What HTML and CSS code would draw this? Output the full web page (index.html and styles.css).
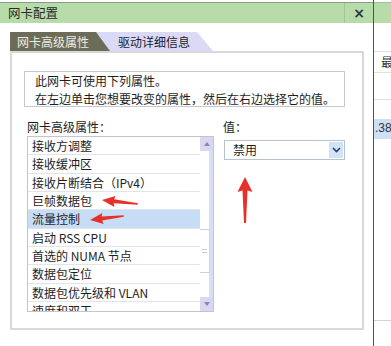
FILE: index.html
```html
<!DOCTYPE html>
<html lang="zh-CN">
<head>
<meta charset="utf-8">
<title>网卡配置</title>
<link rel="stylesheet" href="styles.css">
</head>
<body>
<div class="screen">
  <div class="dialog">
    <div class="titlebar">
      <span class="title">网卡配置</span>
      <span class="close">×</span>
    </div>
    <div class="content">
      <div class="tabs">
        <div class="tab tab-active">网卡高级属性</div>
        <div class="tab tab-other">驱动详细信息</div>
      </div>
      <div class="panel">
        <div class="info">
          <p>此网卡可使用下列属性。</p>
          <p>在左边单击您想要改变的属性，然后在右边选择它的值。</p>
        </div>
        <div class="cols">
          <div class="col-left">
            <div class="label">网卡高级属性：</div>
            <div class="listbox">
              <ul class="items">
                <li>接收方调整</li>
                <li>接收缓冲区</li>
                <li>接收片断结合（IPv4）</li>
                <li>巨帧数据包</li>
                <li class="selected">流量控制</li>
                <li>启动 RSS CPU</li>
                <li>首选的 NUMA 节点</li>
                <li>数据包定位</li>
                <li>数据包优先级和 VLAN</li>
                <li>速度和双工</li>
              </ul>
              <div class="scrollbar">
                <div class="sb-btn"><span class="tri-up"></span></div>
                <div class="sb-track">
                  <div class="sb-thumb"><span class="grip"></span></div>
                </div>
                <div class="sb-btn"><span class="tri-down"></span></div>
              </div>
            </div>
          </div>
          <div class="col-right">
            <div class="label">值：</div>
            <div class="select">
              <span class="select-text">禁用</span>
              <span class="select-btn">
                <svg width="9" height="6" viewBox="0 0 9 6"><path d="M1 1 L4.5 4.5 L8 1" fill="none" stroke="#1f3f7a" stroke-width="1.6"/></svg>
              </span>
            </div>
          </div>
        </div>
      </div>
    </div>
  </div>
  <div class="divider"></div>
  <div class="side">
    <div class="side-title"></div>
    <div class="side-body">
      <div class="side-row side-head">最</div>
      <div class="side-row side-empty"></div>
      <div class="side-row side-thin"></div>
      <div class="side-row side-sel">.38</div>
      <div class="side-fill"></div>
    </div>
  </div>
  <svg class="arrows" width="391" height="346" viewBox="0 0 391 346">
    <g fill="#e8302a">
      <polygon transform="translate(102 200) rotate(6.3)" points="0,0 13,-5.5 12,-2 36,-0.8 36,0.8 12,2 13,5.5"/>
      <polygon transform="translate(90 220) rotate(-6.7)" points="0,0 13,-5.5 12,-2 34,-0.8 34,0.8 12,2 13,5.5"/>
      <polygon transform="translate(245 177) rotate(90)" points="0,0 15,-7.5 13.5,-2.5 46,-1 46,1 13.5,2.5 15,7.5"/>
    </g>
  </svg>
</div>
</body>
</html>
```

FILE: styles.css
```css
* { box-sizing: border-box; }
html, body { margin: 0; padding: 0; background: #ffffff; }
body {
  font-family: "Noto Sans CJK SC", "Noto Sans", sans-serif;
  font-size: 12px;
  color: #1e1e1e;
}
.screen {
  position: relative;
  width: 391px;
  height: 346px;
  overflow: hidden;
  display: flex;
  background: #ffffff;
}
.dialog {
  width: 373px;
  flex: none;
  padding-top: 2px;
}
.titlebar {
  height: 21px;
  border-top: 1px solid #8d9a88;
  background: #b8dca9;
  display: flex;
  align-items: center;
  justify-content: space-between;
}
.title {
  padding-left: 8px;
  font-size: 12.5px;
  line-height: 20px;
  color: #2a2a2a;
}
.close {
  width: 29px;
  height: 20px;
  border-left: 1px solid #a3c695;
  display: flex;
  align-items: center;
  justify-content: center;
  font-family: "DejaVu Sans", sans-serif;
  font-weight: bold;
  font-size: 14px;
  color: #2d3a3f;
}
.content {
  padding-top: 9px;
  padding-left: 10px;
}
.tabs {
  display: flex;
  height: 19px;
}
.tab {
  height: 19px;
  line-height: 19px;
  font-size: 12px;
}
.tab-active {
  position: relative;
  z-index: 1;
  width: 100px;
  padding-left: 7px;
  background: #6c6c58;
  color: #ecece4;
  clip-path: polygon(0 0, 86px 0, 100% 100%, 0 100%);
}
.tab-other {
  width: 118px;
  margin-left: -15px;
  padding-left: 23px;
  background: #dadaf6;
  color: #1c1c2c;
  clip-path: polygon(0 0, 102px 0, 100% 100%, 0 100%);
}
.panel {
  width: 354px;
  height: 279px;
  border: 2px solid #d9d9d9;
  padding: 18px 0 0 12px;
}
.info {
  width: 321px;
  height: 36px;
  border: 1px solid #c9c9c9;
  padding-left: 10px;
}
.info p {
  margin: 0;
  line-height: 18px;
  white-space: nowrap;
}
.cols {
  display: flex;
  margin-top: 12px;
  padding-left: 3px;
  gap: 10px;
}
.label {
  line-height: 16px;
  height: 16px;
  white-space: nowrap;
}
.col-left { width: 187px; }
.col-right { width: 121px; }
.col-right .label { margin-left: -1px; }
.listbox {
  margin-top: 1px;
  width: 187px;
  height: 176px;
  border: 1px solid #c4c4cc;
  display: flex;
  overflow: hidden;
}
.items {
  list-style: none;
  margin: 0;
  padding: 0;
  width: 172px;
  flex: none;
}
.items li {
  height: 18.35px;
  line-height: 17px;
  padding-left: 4px;
  border-bottom: 1px solid #e3e3ea;
  white-space: nowrap;
}
.items li.selected {
  background: #c7ddf6;
}
.scrollbar {
  width: 13px;
  flex: none;
  display: flex;
  flex-direction: column;
  background: linear-gradient(to right, #ffffff 0, #ffffff 9px, #dcdcf4 9px, #dcdcf4 100%);
}
.sb-btn {
  height: 14px;
  background: #d8d8f2;
  display: flex;
  align-items: center;
  justify-content: center;
}
.tri-up, .tri-down {
  width: 0;
  height: 0;
  border-left: 3.5px solid transparent;
  border-right: 3.5px solid transparent;
}
.tri-up { border-bottom: 4px solid #8a8aa8; }
.tri-down { border-top: 4px solid #8a8aa8; }
.sb-track {
  flex: 1;
  padding-top: 78px;
}
.sb-thumb {
  width: 10px;
  height: 44px;
  background: #ffffff;
  border-top: 1px solid #cfcfe0;
  border-bottom: 1px solid #cfcfe0;
  border-right: 1px solid #cfcfe0;
  display: flex;
  align-items: center;
  justify-content: center;
}
.grip {
  width: 5px;
  height: 4px;
  border-top: 1px solid #c8c8d8;
  border-bottom: 1px solid #c8c8d8;
}
.select {
  margin-top: 5px;
  width: 121px;
  height: 20px;
  border: 1px solid #b4c2d2;
  display: flex;
  align-items: center;
  justify-content: space-between;
  padding: 0 1px 0 8px;
}
.select-text { line-height: 18px; }
.select-btn {
  width: 14px;
  height: 16px;
  background: #d2e3f6;
  display: flex;
  align-items: center;
  justify-content: center;
}
.divider {
  width: 1px;
  flex: none;
  background: #505050;
}
.side {
  flex: 1;
  padding-top: 2px;
}
.side-title {
  height: 21px;
  border-top: 1px solid #a8b8a0;
  background: #b8dca9;
}
.side-body {
  padding-top: 28px;
}
.side-row {
  border-top: 1px solid #e2e2e2;
  white-space: nowrap;
  overflow: hidden;
}
.side-head {
  height: 21px;
  line-height: 20px;
  padding-left: 7px;
  color: #333;
}
.side-empty { height: 27px; }
.side-thin { height: 20px; }
.side-sel {
  height: 20px;
  line-height: 19px;
  background: #cde0f6;
  color: #333;
  border-top: none;
  font-family: "Liberation Sans", sans-serif;
  font-size: 12px;
  padding-left: 1px;
}
.side-fill {
  height: 182px;
  border-bottom: 1px solid #d4d4d4;
}
.arrows {
  position: absolute;
  left: 0;
  top: 0;
  pointer-events: none;
}
```
